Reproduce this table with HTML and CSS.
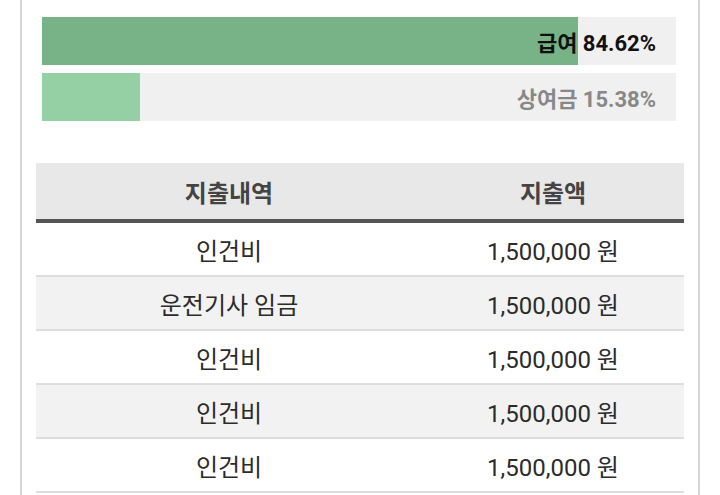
FILE: index.html
```html
<!DOCTYPE html>
<html lang="ko">
<head>
<meta charset="utf-8">
<link rel="stylesheet" href="styles.css">
</head>
<body>
<div class="panel">
  <div class="bars">
    <div class="bar">
      <div class="fill fill-main" style="width:84.62%"></div>
      <span class="label label-main">급여 84.62%</span>
    </div>
    <div class="bar">
      <div class="fill fill-sub" style="width:15.38%"></div>
      <span class="label label-sub">상여금 15.38%</span>
    </div>
  </div>
  <table class="spend">
    <thead>
      <tr><th class="c1">지출내역</th><th class="c2">지출액</th></tr>
    </thead>
    <tbody>
      <tr><td>인건비</td><td>1,500,000 원</td></tr>
      <tr><td>운전기사 임금</td><td>1,500,000 원</td></tr>
      <tr><td>인건비</td><td>1,500,000 원</td></tr>
      <tr><td>인건비</td><td>1,500,000 원</td></tr>
      <tr><td>인건비</td><td>1,500,000 원</td></tr>
    </tbody>
  </table>
</div>
</body>
</html>
```

FILE: styles.css
```css
html, body {
  margin: 0;
  padding: 0;
  background: #fff;
}
body {
  font-family: Roboto, "Noto Sans CJK KR", sans-serif;
  color: #333;
}
.panel {
  margin-left: 20px;
  width: 676px;
  height: 495px;
  border-left: 2px solid #d4d4d4;
  border-right: 2px solid #d4d4d4;
  padding: 17px 0 0 0;
  box-sizing: content-box;
}
.bars {
  display: flex;
  flex-direction: column;
  gap: 8px;
  padding: 0 22px 0 20px;
}
.bar {
  position: relative;
  height: 48px;
  background: #f0f0f0;
  display: flex;
  align-items: center;
  justify-content: flex-end;
}
.fill {
  position: absolute;
  left: 0;
  top: 0;
  bottom: 0;
}
.fill-main { background: #77b386; }
.fill-sub { background: #95d0a5; }
.label {
  position: relative;
  font-size: 22px;
  font-weight: 700;
  padding-right: 20px;
}
.label-main { color: #111; }
.label-sub { color: #888; }
.spend {
  margin: 42px 14px 0 14px;
  width: 648px;
  border-collapse: collapse;
  font-size: 24px;
}
.spend th {
  background: #e8e8e8;
  color: #444;
  font-weight: 700;
  height: 56px;
  padding: 0;
  border-bottom: 4px solid #555;
}
.spend .c1 { width: 386px; }
.spend td {
  height: 52px;
  padding: 0;
  text-align: center;
  color: #2b2b2b;
  border-bottom: 2px solid #ddd;
}
.spend tbody tr:nth-child(even) td {
  background: #f2f2f2;
}
```
